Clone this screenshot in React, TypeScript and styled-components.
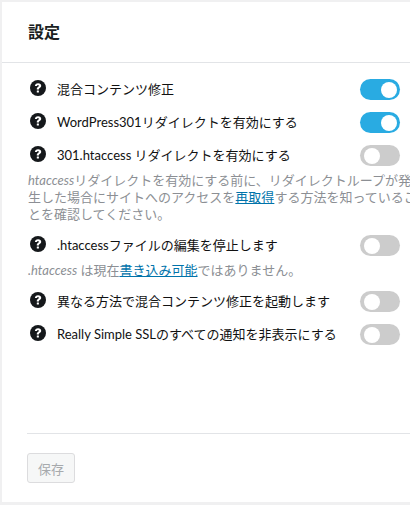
import styled, { createGlobalStyle } from 'styled-components';

const GlobalStyle = createGlobalStyle`
  html, body {
    margin: 0;
    padding: 0;
    width: 410px;
    height: 505px;
    overflow: hidden;
    background: #f0f0f1;
  }
`;

const Card = styled.div`
  box-sizing: border-box;
  width: 408px;
  height: 500px;
  margin: 2px 0 0 2px;
  background: #fff;
  font-family: 'Lato', 'Noto Sans CJK JP', sans-serif;
  display: flex;
  flex-direction: column;
  overflow: hidden;
`;

const Header = styled.div`
  height: 61px;
  flex: none;
  box-sizing: border-box;
  border-bottom: 1px solid #e2e4e7;
  padding: 0 0 3px 26px;
  display: flex;
  align-items: center;
`;

const Title = styled.h3`
  margin: 0;
  font-size: 16px;
  font-weight: 700;
  color: #1b1f23;
`;

const Body = styled.div`
  flex: 1;
  padding: 10px 0 0 26px;
  width: 372px;
`;

const Row = styled.div`
  height: 33px;
  display: flex;
  align-items: center;
`;

const Label = styled.span`
  flex: 1;
  margin-left: 11px;
  padding-bottom: 2px;
  font-size: 13px;
  color: #111;
  white-space: nowrap;
`;

const HelpIcon = styled.svg`
  width: 16px;
  height: 16px;
  margin: 0 0 3px 2px;
  flex: none;
`;

const Track = styled.span<{ $on?: boolean }>`
  position: relative;
  flex: none;
  width: 40px;
  height: 21px;
  border-radius: 11px;
  background: ${(p) => (p.$on ? '#29abe2' : '#cccccc')};
`;

const Knob = styled.span<{ $on?: boolean }>`
  position: absolute;
  top: 2.5px;
  left: ${(p) => (p.$on ? '21px' : '4px')};
  width: 16px;
  height: 16px;
  border-radius: 50%;
  background: #fff;
`;

const Help = styled.p<{ $wide?: boolean }>`
  margin: 0 0 6px;
  width: ${(p) => (p.$wide ? '395px' : 'auto')};
  font-size: 13px;
  line-height: 17px;
  color: #8c8f94;
`;

const Link = styled.a`
  color: #0073aa;
  text-decoration: underline;
`;

const Footer = styled.div`
  margin-left: 25px;
  border-top: 1px solid #e2e4e7;
  padding: 19px 0 19px;
`;

const SaveButton = styled.button`
  box-sizing: border-box;
  display: block;
  width: 48px;
  height: 30px;
  padding: 0;
  font-family: inherit;
  font-size: 13px;
  color: #a7aaad;
  background: #f6f7f7;
  border: 1px solid #dcdcde;
  border-radius: 3px;
`;

function Help16() {
  return (
    <HelpIcon viewBox="0 0 16 16" aria-hidden="true">
      <circle cx="8" cy="8" r="8" fill="#15181b" />
      <path d="M4.9 6.1c0-1.7 1.3-2.9 3.2-2.9s3.1 1.1 3.1 2.6c0 1.1-.6 1.7-1.4 2.2-.7.4-.9.7-.9 1.2v.3H6.8v-.5c0-1 .4-1.5 1.1-2 .6-.4.9-.7.9-1.1 0-.5-.3-.8-.8-.8-.6 0-.9.4-1 1H4.9z" fill="#fff" />
      <rect x="6.8" y="10.5" width="2.1" height="2.1" rx=".3" fill="#fff" />
    </HelpIcon>
  );
}

function Toggle({ on }: { on?: boolean }) {
  return (
    <Track $on={on}>
      <Knob $on={on} />
    </Track>
  );
}

function SettingRow({ label, on }: { label: string; on?: boolean }) {
  return (
    <Row>
      <Help16 />
      <Label>{label}</Label>
      <Toggle on={on} />
    </Row>
  );
}

export default function App() {
  return (
    <>
      <GlobalStyle />
      <Card>
        <Header>
          <Title>設定</Title>
        </Header>
        <Body>
          <SettingRow label="混合コンテンツ修正" on />
          <SettingRow label="WordPress301リダイレクトを有効にする" on />
          <SettingRow label="301.htaccess リダイレクトを有効にする" />
          <Help $wide>
            <em>htaccess</em>リダイレクトを有効にする前に、リダイレクトループが発生した場合にサイトへのアクセスを
            <Link href="#">再取得</Link>する方法を知っていることを確認してください。
          </Help>
          <SettingRow label=".htaccessファイルの編集を停止します" />
          <Help>
            <em>.htaccess</em> は現在<Link href="#">書き込み可能</Link>ではありません。
          </Help>
          <SettingRow label="異なる方法で混合コンテンツ修正を起動します" />
          <SettingRow label="Really Simple SSLのすべての通知を非表示にする" />
        </Body>
        <Footer>
          <SaveButton disabled>保存</SaveButton>
        </Footer>
      </Card>
    </>
  );
}
